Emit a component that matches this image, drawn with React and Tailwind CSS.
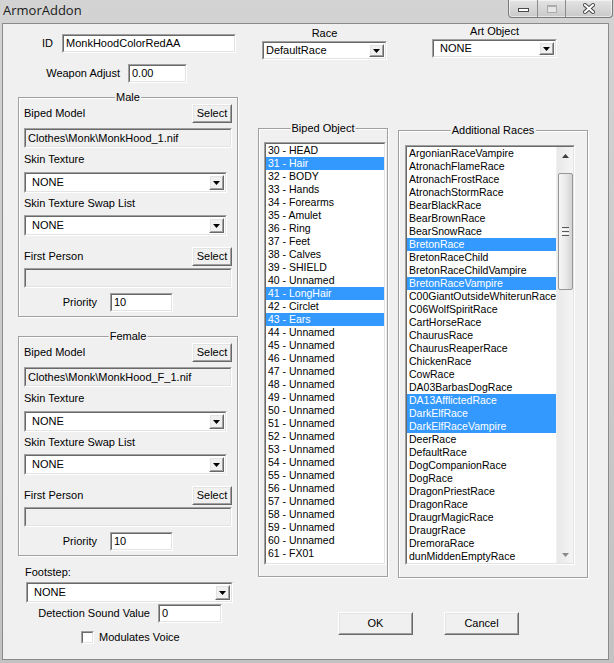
import React from "react";

const biped = [
  "30 - HEAD", "31 - Hair", "32 - BODY", "33 - Hands", "34 - Forearms", "35 - Amulet",
  "36 - Ring", "37 - Feet", "38 - Calves", "39 - SHIELD", "40 - Unnamed", "41 - LongHair",
  "42 - Circlet", "43 - Ears", "44 - Unnamed", "45 - Unnamed", "46 - Unnamed", "47 - Unnamed",
  "48 - Unnamed", "49 - Unnamed", "50 - Unnamed", "51 - Unnamed", "52 - Unnamed", "53 - Unnamed",
  "54 - Unnamed", "55 - Unnamed", "56 - Unnamed", "57 - Unnamed", "58 - Unnamed", "59 - Unnamed",
  "60 - Unnamed", "61 - FX01",
];
const bipedSel = new Set(["31 - Hair", "41 - LongHair", "43 - Ears"]);

const races = [
  "ArgonianRaceVampire", "AtronachFlameRace", "AtronachFrostRace", "AtronachStormRace",
  "BearBlackRace", "BearBrownRace", "BearSnowRace", "BretonRace", "BretonRaceChild",
  "BretonRaceChildVampire", "BretonRaceVampire", "C00GiantOutsideWhiterunRace",
  "C06WolfSpiritRace", "CartHorseRace", "ChaurusRace", "ChaurusReaperRace", "ChickenRace",
  "CowRace", "DA03BarbasDogRace", "DA13AfflictedRace", "DarkElfRace", "DarkElfRaceVampire",
  "DeerRace", "DefaultRace", "DogCompanionRace", "DogRace", "DragonPriestRace", "DragonRace",
  "DraugrMagicRace", "DraugrRace", "DremoraRace", "dunMiddenEmptyRace",
];
const racesSel = new Set([
  "BretonRace", "BretonRaceVampire", "DA13AfflictedRace", "DarkElfRace", "DarkElfRaceVampire",
]);

function Sunken({ className = "", innerClassName = "", children }) {
  return (
    <div className={`border border-t-[#a0a0a0] border-l-[#a0a0a0] border-r-white border-b-white ${className}`}>
      <div className={`h-full w-full border border-t-[#696969] border-l-[#696969] border-r-[#e3e3e3] border-b-[#e3e3e3] ${innerClassName}`}>
        {children}
      </div>
    </div>
  );
}

function Raised({ className = "", children }) {
  return (
    <div className={`border border-t-white border-l-white border-r-[#696969] border-b-[#696969] bg-[#f0f0f0] ${className}`}>
      <div className="h-full w-full border border-t-[#e3e3e3] border-l-[#e3e3e3] border-r-[#a0a0a0] border-b-[#a0a0a0] flex items-center justify-center">
        {children}
      </div>
    </div>
  );
}

function Tri() {
  return (
    <svg width="7" height="4" viewBox="0 0 7 4">
      <path d="M0 0H7L3.5 4Z" fill="#000" />
    </svg>
  );
}

function Combo({ className = "", text, pl = "pl-[6px]" }) {
  return (
    <Sunken className={className} innerClassName="bg-white flex items-stretch">
      <div className={`flex-1 flex items-center ${pl} leading-none whitespace-nowrap`}>{text}</div>
      <div className="flex py-[1px] pr-[1px]">
        <Raised className="w-[15px]">
          <Tri />
        </Raised>
      </div>
    </Sunken>
  );
}

function Field({ className = "", text, bg = "bg-white" }) {
  return (
    <Sunken className={className} innerClassName={`${bg} flex items-center pl-[2px] leading-none whitespace-nowrap`}>
      {text}
    </Sunken>
  );
}

function Group({ title, className = "", children }) {
  return (
    <div className={`relative border border-[#a0a0a0] shadow-[inset_1px_1px_0_#fff,1px_1px_0_#fff] ${className}`}>
      <span className="absolute left-1/2 -translate-x-1/2 -top-[7px] bg-[#f0f0f0] px-[1px] leading-[13px] whitespace-nowrap">
        {title}
      </span>
      {children}
    </div>
  );
}

function ModelGroup({ title, path, className = "" }) {
  return (
    <Group title={title} className={`h-[220px] flex flex-col ${className}`}>
      <div className="mt-[6px] flex items-center justify-between pl-[5px] pr-[5px]">
        <span className="leading-[13px]">Biped Model</span>
        <Raised className="w-[40px] h-[19px]">
          <span className="leading-none">Select</span>
        </Raised>
      </div>
      <Field className="mt-[5px] mx-[5px] h-[20px]" bg="bg-[#f0f0f0]" text={path} />
      <div className="mt-[5px] pl-[5px] leading-[13px]">Skin Texture</div>
      <Combo className="mt-[6px] ml-[5px] w-[203px] h-[21px]" text="NONE" />
      <div className="mt-[4px] pl-[5px] leading-[13px]">Skin Texture Swap List</div>
      <Combo className="mt-[5px] ml-[5px] w-[203px] h-[21px]" text="NONE" />
      <div className="mt-[11px] flex items-center justify-between pl-[5px] pr-[5px]">
        <span className="leading-[13px]">First Person</span>
        <Raised className="w-[40px] h-[19px]">
          <span className="leading-none">Select</span>
        </Raised>
      </div>
      <Field className="mt-[2px] mx-[5px] h-[20px]" bg="bg-[#f0f0f0]" text="" />
      <div className="mt-[5px] flex items-center">
        <span className="w-[78px] text-right leading-[13px]">Priority</span>
        <Field className="ml-[13px] w-[63px] h-[19px]" text="10" />
      </div>
    </Group>
  );
}

function Row({ text, sel }) {
  return (
    <div
      className={`h-[13px] leading-[13px] pl-[2px] whitespace-nowrap ${
        sel ? "bg-[#3399ff] text-white" : ""
      }`}
    >
      {text}
    </div>
  );
}

function Scrollbar() {
  return (
    <div className="w-[17px] h-full flex flex-col bg-gradient-to-r from-[#e8e8e8] to-[#f5f5f5] border-l border-l-[#f0f0f0]">
      <div className="h-[17px] flex items-center justify-center">
        <svg width="7" height="4" viewBox="0 0 7 4">
          <path d="M0 4H7L3.5 0Z" fill="#3c3c3c" />
        </svg>
      </div>
      <div className="flex-1 relative">
        <div className="absolute left-[1px] right-[0px] top-[9px] h-[117px] rounded-[2px] border border-[#979797] bg-gradient-to-r from-[#f6f6f6] via-[#e9e9e9] to-[#d3d3d3] flex flex-col items-center justify-center gap-[1px]">
          <div className="w-[7px] h-[1px] bg-[#5a5a5a]" />
          <div className="w-[7px] h-[1px] bg-white" />
          <div className="w-[7px] h-[1px] bg-[#5a5a5a]" />
          <div className="w-[7px] h-[1px] bg-white" />
          <div className="w-[7px] h-[1px] bg-[#5a5a5a]" />
        </div>
      </div>
      <div className="h-[17px] flex items-center justify-center">
        <svg width="7" height="4" viewBox="0 0 7 4">
          <path d="M0 0H7L3.5 4Z" fill="#8a8a8a" />
        </svg>
      </div>
    </div>
  );
}

function CaptionButtons() {
  return (
    <div className="ml-auto mr-[1px] flex h-[18px] rounded-b-[4px] border border-t-0 border-[#7a7a7a] overflow-hidden bg-gradient-to-b from-[#e4e4e4] to-[#c9c9c9] shadow-[inset_0_0_0_1px_rgba(255,255,255,0.55)]">
      <div className="w-[28px] flex items-center justify-center">
        <div className="mt-[3px] w-[11px] h-[4px] bg-white border border-[#4a4a4a]" />
      </div>
      <div className="w-[28px] flex items-center justify-center border-l border-l-[#8c8c8c]">
        <div className="w-[10px] h-[8px] border border-[#ababab] border-t-2 bg-[#e6e6e6]" />
      </div>
      <div className="w-[47px] flex items-center justify-center border-l border-l-[#8c8c8c]">
        <svg width="12" height="11" viewBox="0 0 12 11">
          <path d="M2 2L10 9M10 2L2 9" stroke="#4a4a4a" strokeWidth="4" strokeLinecap="square" />
          <path d="M2 2L10 9M10 2L2 9" stroke="#ffffff" strokeWidth="2" strokeLinecap="square" />
        </svg>
      </div>
    </div>
  );
}

export default function App() {
  return (
    <div className="w-[614px] h-[663px] bg-gradient-to-b from-[#d3d3d3] to-[#c2c2c2] font-['Liberation_Sans',Arial,sans-serif] text-[11px] text-black flex flex-col overflow-hidden">
      {/* title bar */}
      <div className="h-[23px] flex items-start">
        <span className="pl-[3px] pt-[2px] text-[13px] leading-[17px] text-[#1a1a1a] font-['Open_Sans','Liberation_Sans',sans-serif]">
          ArmorAddon
        </span>
        <CaptionButtons />
      </div>

      {/* body */}
      <div className="ml-[2px] w-[607px] h-[637px] border border-[#8a8a8a] bg-[#f0f0f0] flex pl-[15px] pt-[1px]">
        {/* left column */}
        <div className="w-[220px] mt-[9px] flex flex-col">
          <div className="h-[19px] flex items-center">
            <span className="w-[35px] text-right leading-[13px]">ID</span>
            <Field className="ml-[9px] w-[174px] h-[19px]" text="MonkHoodColorRedAA" />
          </div>
          <div className="mt-[11px] h-[19px] flex items-center">
            <span className="w-[102px] text-right leading-[13px]">Weapon Adjust</span>
            <Field className="ml-[8px] w-[59px] h-[19px]" text="0.00" />
          </div>

          <ModelGroup title="Male" path="Clothes\Monk\MonkHood_1.nif" className="mt-[14px]" />
          <ModelGroup title="Female" path="Clothes\Monk\MonkHood_F_1.nif" className="mt-[19px]" />

          <div className="mt-[10px] pl-[7px] leading-[13px]">Footstep:</div>
          <Combo className="mt-[3px] ml-[8px] w-[207px] h-[21px]" text="NONE" />
          <div className="mt-[1px] h-[19px] flex items-center">
            <span className="w-[132px] text-right leading-[13px]">Detection Sound Value</span>
            <Field className="ml-[8px] w-[64px] h-[19px]" text="0" />
          </div>
          <div className="mt-[8px] pl-[63px] flex items-center">
            <Sunken className="w-[13px] h-[13px]" innerClassName="bg-white" />
            <span className="ml-[5px] leading-[13px]">Modulates Voice</span>
          </div>
        </div>

        {/* right area */}
        <div className="ml-[20px] flex flex-col">
          <div className="flex items-start">
            {/* middle column */}
            <div className="w-[130px] mt-[2px] flex flex-col">
              <div className="ml-[4px] w-[125px] text-center leading-[13px]">Race</div>
              <Combo className="mt-[1px] ml-[4px] w-[125px] h-[19px]" text="DefaultRace" pl="pl-[2px]" />
              <Group title="Biped Object" className="mt-[68px] h-[449px]">
                <Sunken className="mt-[13px] ml-[5px] w-[122px] h-[423px]" innerClassName="bg-white overflow-hidden text-[10.5px]">
                  {biped.map((b) => (
                    <Row key={b} text={b} sel={bipedSel.has(b)} />
                  ))}
                </Sunken>
              </Group>
            </div>

            {/* right column */}
            <div className="w-[190px] ml-[10px] flex flex-col">
              <div className="ml-[34px] w-[125px] text-center leading-[13px]">Art Object</div>
              <Combo className="mt-[1px] ml-[34px] w-[125px] h-[19px]" text="NONE" />
              <Group title="Additional Races" className="mt-[72px] h-[448px]">
                <Sunken className="mt-[14px] ml-[6px] w-[170px] h-[420px]" innerClassName="bg-white flex overflow-hidden">
                  <div className="flex-1 overflow-hidden text-[10.5px]">
                    {races.map((r) => (
                      <Row key={r} text={r} sel={racesSel.has(r)} />
                    ))}
                  </div>
                  <Scrollbar />
                </Sunken>
              </Group>
            </div>
          </div>

          <div className="mt-[34px] pl-[80px] flex">
            <Raised className="w-[75px] h-[23px]">
              <span className="leading-none">OK</span>
            </Raised>
            <Raised className="ml-[31px] w-[75px] h-[23px]">
              <span className="leading-none">Cancel</span>
            </Raised>
          </div>
        </div>
      </div>
    </div>
  );
}
